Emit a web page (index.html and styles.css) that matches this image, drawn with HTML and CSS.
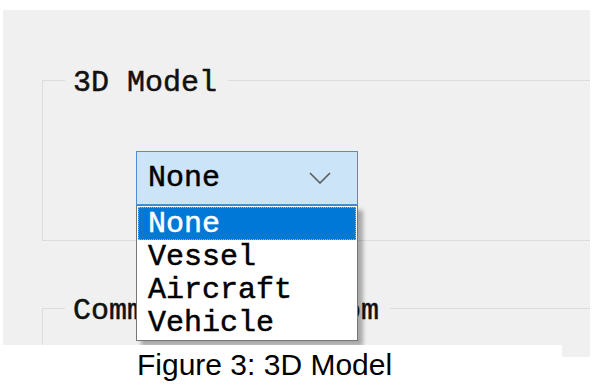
FILE: index.html
```html
<!DOCTYPE html>
<html lang="en">
<head>
  <meta charset="UTF-8">
  <title>3D Model</title>
  <link rel="stylesheet" href="styles.css">
</head>
<body>
  <div class="panel">
    <fieldset class="group">
      <legend>3D Model</legend>
      <div class="combo">
        <span>None</span>
        <svg class="chevron" width="22" height="12" viewBox="0 0 22 12">
          <polyline points="1,1 11,11 21,1" fill="none" stroke="#5c5c5c" stroke-width="1.6"/>
        </svg>
        <ul class="list">
          <li class="selected">None</li>
          <li>Vessel</li>
          <li>Aircraft</li>
          <li>Vehicle</li>
        </ul>
      </div>
    </fieldset>

    <fieldset class="group group-low">
      <legend>Communication Com</legend>
    </fieldset>
  </div>

  <div class="foot">
    <p class="caption">Figure 3: 3D Model</p>
    <div class="tail"></div>
  </div>
</body>
</html>
```

FILE: styles.css
```css
body {
  margin: 0;
  background: #fff;
  font-family: 'Liberation Mono', monospace;
  color: #000;
}
.panel {
  margin: 10px 2px 0 3px;
  height: 335px;
  box-sizing: border-box;
  padding: 52px 0 0 39px;
  background: #f0f0f0;
  overflow: hidden;
}
.group {
  margin: 0 -40px 0 0;
  padding: 53px 0 35px 22px;
  border: 1px solid #dcdcdc;
  min-width: 0;
}
.group legend {
  padding: 6px 11px 0 8px;
  font-size: 30px;
  line-height: 30px;
  color: #111;
  -webkit-text-stroke: 0.5px #111;
}
.group-low {
  margin-top: 49px;
  height: 80px;
}
.combo {
  position: relative;
  margin-left: 71px;
  width: 222px;
  height: 54px;
  box-sizing: border-box;
  display: flex;
  align-items: center;
  padding-left: 11px;
  border: 1px solid #4a8fd8;
  background: #cce4f7;
  font-size: 30px;
  line-height: 30px;
  -webkit-text-stroke: 0.5px #000;
}
.chevron {
  margin-left: auto;
  margin-right: 26px;
}
.list {
  position: absolute;
  top: 100%;
  left: -1px;
  width: 222px;
  box-sizing: border-box;
  margin: 1px 0 0;
  padding: 1px;
  list-style: none;
  background: #fff;
  border: 1px solid #767676;
  box-shadow: 5px 5px 4px rgba(0, 0, 0, 0.3);
}
.list li {
  height: 33px;
  padding-left: 10px;
  line-height: 34px;
}
.list .selected {
  background: #0078d7;
  color: #fff;
  -webkit-text-stroke: 0.5px #fff;
  outline: 1px dotted #f0a040;
  outline-offset: -1px;
}
.foot {
  display: flex;
}
.caption {
  flex: 1;
  margin: 0;
  padding: 3px 0 0 137px;
  font-family: 'Liberation Sans', Arial, sans-serif;
  font-size: 30px;
  line-height: 34px;
  color: #000;
}
.tail {
  width: 28px;
  height: 12px;
  margin-right: 2px;
  background: #f0f0f0;
  border-radius: 0 0 3px 3px;
}
```
